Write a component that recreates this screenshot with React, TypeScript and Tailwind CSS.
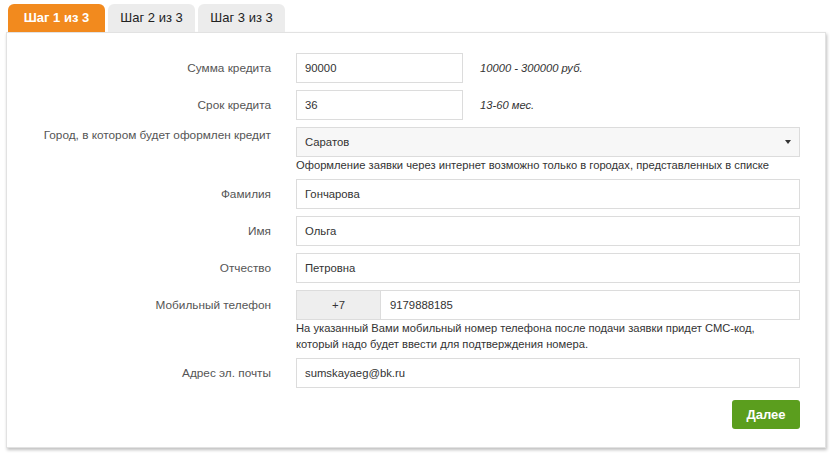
const font = { fontFamily: '"Liberation Sans", Arial, sans-serif' }

function Row({
  label,
  children,
  labelClass = 'pt-[8px]',
}: {
  label: string
  children: React.ReactNode
  labelClass?: string
}) {
  return (
    <div className="grid grid-cols-[264px_1fr] gap-x-[25px]">
      <label className={`text-right text-[11.8px] leading-[15px] text-[#555] ${labelClass}`}>
        {label}
      </label>
      <div>{children}</div>
    </div>
  )
}

function Field({ value, className = 'w-full' }: { value: string; className?: string }) {
  return (
    <div
      className={`flex h-[30px] items-center border border-[#dcdcdc] bg-white px-[8px] text-[11.3px] text-[#333] ${className}`}
    >
      {value}
    </div>
  )
}

function Hint({ children }: { children: React.ReactNode }) {
  return <p className="-mb-[1px] text-[11.2px] leading-[16px] text-[#333]">{children}</p>
}

export default function App() {
  return (
    <div className="min-h-screen w-full bg-white pl-[6px] pr-[9px] pt-[4px]" style={font}>
      <div className="flex gap-[3px] pl-[2px]">
        <div className="flex h-[28px] w-[97px] items-center justify-center rounded-t-[6px] bg-[#f28a1e] text-[13px] font-bold text-white">
          Шаг 1 из 3
        </div>
        <div className="flex h-[28px] w-[87px] items-center justify-center rounded-t-[6px] bg-[#ececec] text-[13px] text-[#222]">
          Шаг 2 из 3
        </div>
        <div className="flex h-[28px] w-[87px] items-center justify-center rounded-t-[6px] bg-[#ececec] text-[13px] text-[#222]">
          Шаг 3 из 3
        </div>
      </div>
      <div className="flex flex-col gap-[7px] border border-[#e2e2e2] bg-white pb-[18px] pl-0 pr-[25px] pt-[20px] shadow-[1px_2px_3px_rgba(0,0,0,0.25)]">
        <Row label="Сумма кредита">
          <div className="flex items-center gap-[17px]">
            <Field value="90000" className="w-[167px]" />
            <span className="text-[11.2px] italic text-[#333]">10000 - 300000 руб.</span>
          </div>
        </Row>
        <Row label="Срок кредита">
          <div className="flex items-center gap-[17px]">
            <Field value="36" className="w-[167px]" />
            <span className="text-[11.2px] italic text-[#333]">13-60 мес.</span>
          </div>
        </Row>
        <Row label="Город, в котором будет оформлен кредит" labelClass="pt-[1px]">
          <div className="flex h-[30px] w-full items-center justify-between border border-[#dcdcdc] bg-[#f7f7f7] pl-[8px] pr-[8px] text-[11.3px] text-[#333]">
            <span>Саратов</span>
            <span className="h-0 w-0 border-x-[3px] border-t-[4px] border-x-transparent border-t-[#333]" />
          </div>
          <Hint>Оформление заявки через интернет возможно только в городах, представленных в списке</Hint>
        </Row>
        <Row label="Фамилия">
          <Field value="Гончарова" />
        </Row>
        <Row label="Имя">
          <Field value="Ольга" />
        </Row>
        <Row label="Отчество">
          <Field value="Петровна" />
        </Row>
        <Row label="Мобильный телефон">
          <div className="flex h-[30px] w-full border border-[#dcdcdc] text-[11.3px] text-[#333]">
            <div className="flex w-[84px] items-center justify-center border-r border-[#dcdcdc] bg-[#eeeeee]">
              +7
            </div>
            <div className="flex flex-1 items-center bg-white px-[9px]">9179888185</div>
          </div>
          <Hint>
            На указанный Вами мобильный номер телефона после подачи заявки придет СМС-код,
            <br />
            который надо будет ввести для подтверждения номера.
          </Hint>
        </Row>
        <Row label="Адрес эл. почты">
          <Field value="sumskayaeg@bk.ru" />
        </Row>
        <div className="mt-[5px] flex justify-end">
          <button className="h-[29px] w-[68px] rounded-[3px] bg-[#5b9e1e] text-[13px] font-bold text-white">
            Далее
          </button>
        </div>
      </div>
    </div>
  )
}
